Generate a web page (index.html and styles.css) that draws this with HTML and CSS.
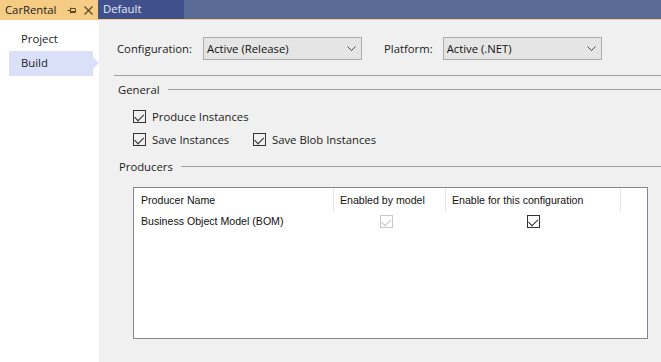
FILE: index.html
```html
<!DOCTYPE html>
<html>
<head>
<meta charset="utf-8">
<link rel="stylesheet" href="styles.css">
</head>
<body>
<div class="topbar">
  <div class="doc-tab">
    <span class="doc-title">CarRental</span>
    <svg class="pin" width="9" height="9" viewBox="0 0 9 9"><path d="M0.5 4.5H3.5M3.5 1.5V7.5M3.5 2.5H8.5V6.5H3.5M3.5 5.5H8.5" fill="none" stroke="#5a4a2a" stroke-width="1"/></svg>
    <svg class="close" width="9" height="9" viewBox="0 0 9 9"><path d="M0.5 0.5L8.5 8.5M8.5 0.5L0.5 8.5" fill="none" stroke="#5a4a2a" stroke-width="1.2"/></svg>
  </div>
  <div class="tab-default">Default</div>
</div>
<div class="body">
  <nav class="sidebar">
    <div class="nav-item first">Project</div>
    <div class="nav-item active">Build</div>
  </nav>
  <main class="main">
    <div class="config-row">
      <span class="label">Configuration:</span>
      <div class="select sel1"><span>Active (Release)</span><svg width="9" height="5" viewBox="0 0 9 5"><path d="M0.5 0.5L4.5 4.5L8.5 0.5" fill="none" stroke="#444" stroke-width="1"/></svg></div>
      <span class="label plat">Platform:</span>
      <div class="select sel2"><span>Active (.NET)</span><svg width="9" height="5" viewBox="0 0 9 5"><path d="M0.5 0.5L4.5 4.5L8.5 0.5" fill="none" stroke="#444" stroke-width="1"/></svg></div>
    </div>
    <div class="hr"></div>
    <div class="group-head general"><span>General</span><div class="gline"></div></div>
    <div class="check-row r1">
      <label class="chk"><span class="box checked"></span>Produce Instances</label>
    </div>
    <div class="check-row r2">
      <label class="chk w1"><span class="box checked"></span>Save Instances</label>
      <label class="chk"><span class="box checked"></span>Save Blob Instances</label>
    </div>
    <div class="group-head producers"><span>Producers</span><div class="gline"></div></div>
    <div class="table">
      <div class="trow thead">
        <div class="c c1">Producer Name</div>
        <div class="c c2">Enabled by model</div>
        <div class="c c3">Enable for this configuration</div>
        <div class="c c4"></div>
      </div>
      <div class="trow tbody">
        <div class="c c1">Business Object Model (BOM)</div>
        <div class="c c2 center"><span class="tbox disabled"></span></div>
        <div class="c c3 center"><span class="tbox"></span></div>
        <div class="c c4"></div>
      </div>
    </div>
  </main>
</div>
</body>
</html>
```
FILE: styles.css
```css
* { box-sizing: border-box; }
html, body { margin: 0; padding: 0; }
body {
  width: 661px;
  height: 362px;
  overflow: hidden;
  font-family: "Open Sans", "Noto Sans", sans-serif;
  font-size: 11.3px;
  color: #1b1b1b;
  background: #f0f0f0;
}
.topbar {
  display: flex;
  height: 20px;
  background: #5b6b97;
  border-bottom: 1px solid #f5cc84;
}
.doc-tab {
  width: 98px;
  height: 20px;
  background: #f5cc84;
  display: flex;
  align-items: center;
  padding-left: 5px;
  color: #1e1e1e;
}
.doc-title { line-height: 18px; }
.pin { margin-left: 11px; }
.close { margin-left: 8px; }
.tab-default {
  width: 86px;
  height: 19px;
  background: #40508c;
  color: #e8ecf6;
  padding-left: 5px;
  line-height: 18px;
}
.body {
  display: flex;
  height: 342px;
}
.sidebar {
  width: 99px;
  background: #fff;
  padding-top: 6px;
}
.nav-item {
  height: 25px;
  line-height: 24px;
  padding-left: 12px;
  margin-left: 9px;
  width: 84px;
  position: relative;
}
.nav-item.first { line-height: 26px; }
.nav-item.active { background: #dae0f8; }
.nav-item.active::after {
  content: "";
  position: absolute;
  right: -6px;
  top: 6px;
  border-top: 6.5px solid transparent;
  border-bottom: 6.5px solid transparent;
  border-left: 6px solid #dae0f8;
}
.main {
  flex: 1;
  display: flex;
  flex-direction: column;
  padding-left: 15px;
}
.config-row {
  display: flex;
  align-items: center;
  margin-top: 17px;
  height: 23px;
}
.label { margin-left: 3px; }
.plat { margin-left: 22px; }
.select {
  display: flex;
  align-items: center;
  justify-content: space-between;
  height: 23px;
  background: #e5e5e5;
  border: 1px solid #adadad;
  padding: 0 5px 0 3px;
  color: #111;
}
.sel1 { width: 159px; margin-left: 11px; }
.sel2 { width: 159px; margin-left: 10px; }
.hr {
  margin-top: 15px;
  height: 1px;
  background: #a0a0a0;
}
.group-head {
  display: flex;
  align-items: center;
  height: 16px;
}
.group-head span { margin-left: 4px; }
.gline {
  flex: 1;
  height: 1px;
  background: #a0a0a0;
  margin-left: 8px;
}
.general { margin-top: 5px; }
.check-row {
  display: flex;
  align-items: center;
  height: 16px;
  padding-left: 19px;
}
.r1 { margin-top: 11px; }
.r2 { margin-top: 7px; }
.chk {
  display: flex;
  align-items: center;
}
.w1 { width: 120px; }
.box {
  width: 13px;
  height: 13px;
  border: 1px solid #333;
  margin-right: 6px;
  position: relative;
}
.box.checked::after, .tbox::after {
  content: "";
  position: absolute;
  left: 2px;
  top: 1px;
  width: 7px;
  height: 3.5px;
  border-left: 1px solid #333;
  border-bottom: 1px solid #333;
  transform: translate(-1px, 2px) rotate(-45deg) scale(1.1, 1.1);
  transform-origin: center;
}
.producers { margin-top: 11px; }
.producers span { margin-left: 5px; }
.table {
  margin-left: 19px;
  margin-top: 13px;
  width: 515px;
  height: 152px;
  border: 1px solid #828790;
  background: #fff;
  font-family: "Liberation Sans", Arial, sans-serif;
  font-size: 10.6px;
  color: #111;
}
.trow { display: flex; }
.thead { height: 23px; }
.tbody { height: 20px; }
.c {
  display: flex;
  align-items: center;
  padding-left: 7px;
}
.thead .c { border-right: 1px solid #e5e5e5; padding-top: 1px; }
.thead .c4 { border-right: none; }
.c1 { width: 200px; }
.c2 { width: 112px; padding-left: 6px; }
.c3 { width: 175px; padding-left: 6px; }
.c4 { flex: 1; }
.center { justify-content: center; padding-left: 0; }
.tbox {
  width: 13px;
  height: 13px;
  border: 1px solid #333;
  position: relative;
  background: #fff;
}
.tbox.disabled { border-color: #c8c8c8; }
.tbox.disabled::after { border-color: #c8c8c8; }
.c2.center { padding-right: 7px; }
.c3.center { padding-right: 1px; }
```
